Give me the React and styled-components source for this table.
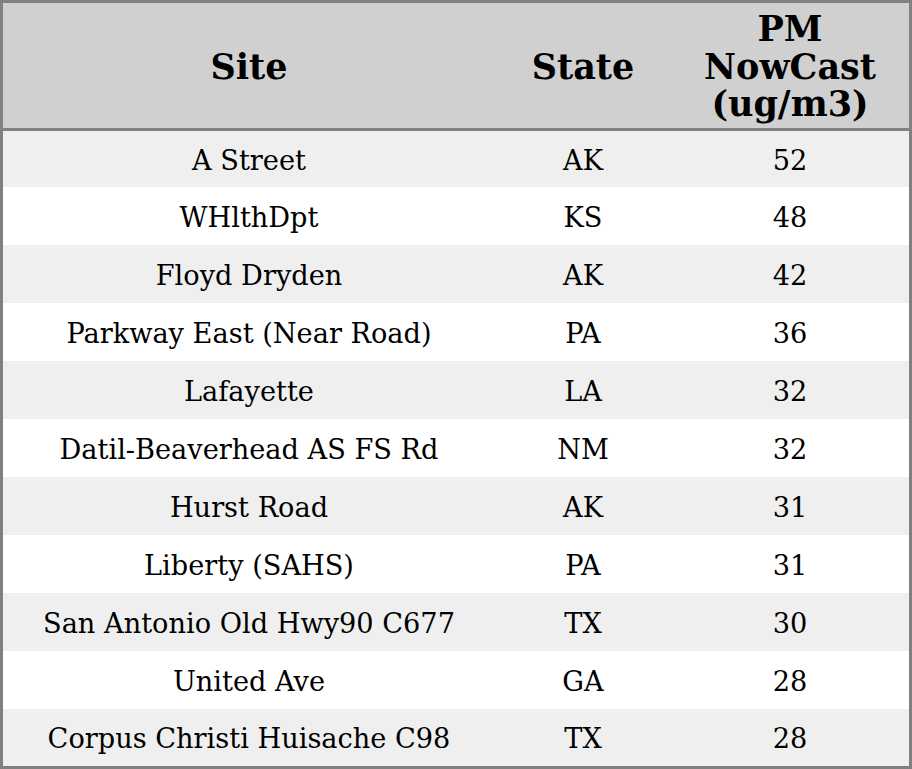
import React from "react";
import styled, { createGlobalStyle } from "styled-components";

const Global = createGlobalStyle`
  html, body { margin: 0; padding: 0; background: #ffffff; }
  body { font-family: "DejaVu Serif", serif; }
`;

const Table = styled.div`
  box-sizing: border-box;
  width: 912px;
  height: 769px;
  border: 3px solid #808080;
  display: grid;
  grid-template-columns: 492px 176px 238px;
  grid-template-rows: 128px 56px repeat(9, 58px) 57px;
  font-family: "DejaVu Serif", serif;
  color: #000;
`;

const HeadCell = styled.div`
  box-sizing: border-box;
  background: #d0d0d0;
  border-bottom: 3px solid #808080;
  display: flex;
  align-items: center;
  justify-content: center;
  text-align: center;
  font-weight: bold;
  font-size: 35px;
  line-height: 37.5px;
  padding-top: 2px;
`;

const Cell = styled.div`
  display: flex;
  align-items: center;
  justify-content: center;
  font-size: 27.2px;
  white-space: nowrap;
  padding-top: 2px;
  background: ${(p) => (p.$alt ? "#efefef" : "#ffffff")};
`;

const rows = [
  ["A Street", "AK", "52"],
  ["WHlthDpt", "KS", "48"],
  ["Floyd Dryden", "AK", "42"],
  ["Parkway East (Near Road)", "PA", "36"],
  ["Lafayette", "LA", "32"],
  ["Datil-Beaverhead AS FS Rd", "NM", "32"],
  ["Hurst Road", "AK", "31"],
  ["Liberty (SAHS)", "PA", "31"],
  ["San Antonio Old Hwy90 C677", "TX", "30"],
  ["United Ave", "GA", "28"],
  ["Corpus Christi Huisache C98", "TX", "28"],
];

export default function App() {
  return (
    <>
      <Global />
      <Table>
        <HeadCell>Site</HeadCell>
        <HeadCell>State</HeadCell>
        <HeadCell>
          PM
          <br />
          NowCast
          <br />
          (ug/m3)
        </HeadCell>
        {rows.map((r, i) =>
          r.map((v, j) => (
            <Cell key={`${i}-${j}`} $alt={i % 2 === 0}>
              {v}
            </Cell>
          ))
        )}
      </Table>
    </>
  );
}
